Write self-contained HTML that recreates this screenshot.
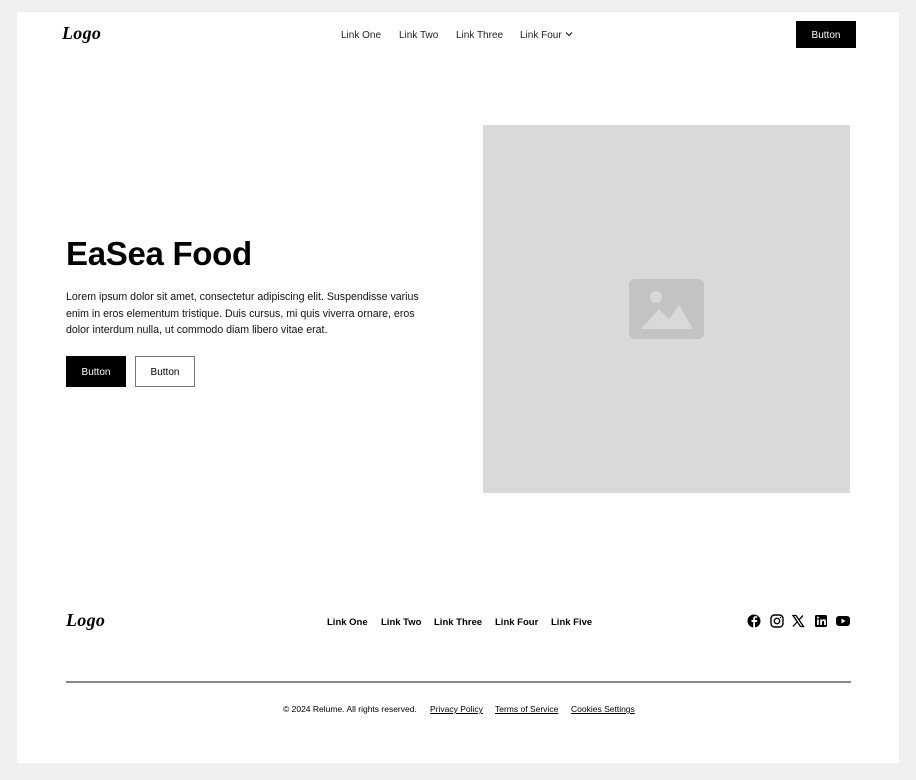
<!DOCTYPE html>
<html><head><style>
*{margin:0;padding:0;box-sizing:border-box}
body{width:916px;height:780px;background:#f0efed;font-family:"Liberation Sans",sans-serif;color:#000;position:relative;overflow:hidden}
.panel{position:absolute;left:17px;top:12px;width:882px;height:751px;background:#fff}
.a{position:absolute;white-space:nowrap}
.logo{font-family:"Liberation Serif",serif;font-style:italic;font-weight:bold;font-size:18px;letter-spacing:0.3px}
.nav{font-size:10px;color:#222}
.btn{position:absolute;font-size:10px;display:flex;align-items:center;justify-content:center;padding-top:2px}
.fl{font-size:9.5px;font-weight:bold}
.sm{font-size:8.5px}
u{text-decoration:underline}
</style></head><body>
<div class="panel"></div>
<div class="a logo" style="left:62px;top:23px">Logo</div>
<div class="a nav" style="left:341px;top:30px">Link One</div>
<div class="a nav" style="left:399px;top:30px">Link Two</div>
<div class="a nav" style="left:456px;top:30px">Link Three</div>
<div class="a nav" style="left:520px;top:30px">Link Four</div>
<svg class="a" style="left:565px;top:31px" width="8" height="6" viewBox="0 0 8 6"><path d="M1 1.5L4 4.5L7 1.5" stroke="#222" fill="none" stroke-width="1.2"/></svg>
<div class="btn" style="left:796px;top:21px;width:60px;height:27px;background:#000;color:#fff">Button</div>

<div class="a" style="left:66px;top:235px;font-size:33px;font-weight:bold;letter-spacing:-0.3px">EaSea Food</div>
<div class="a" style="left:66px;top:289px;width:375px;white-space:normal;font-size:10.6px;line-height:16.5px;color:#111">Lorem ipsum dolor sit amet, consectetur adipiscing elit. Suspendisse varius enim in eros elementum tristique. Duis cursus, mi quis viverra ornare, eros dolor interdum nulla, ut commodo diam libero vitae erat.</div>
<div class="btn" style="left:66px;top:356px;width:60px;height:31px;background:#000;color:#fff">Button</div>
<div class="btn" style="left:135px;top:356px;width:60px;height:31px;border:1px solid #777">Button</div>

<div class="a" style="left:483px;top:125px;width:367px;height:368px;background:#d9d9d9"></div>
<svg class="a" style="left:629px;top:279px" width="75" height="60" viewBox="0 0 75 60"><rect width="75" height="60" rx="6" fill="#c3c3c3"/><circle cx="27" cy="18" r="6" fill="#d9d9d9"/><path d="M12 50L30 30L40 40L50 26L64 50Z" fill="#d9d9d9"/></svg>

<div class="a logo" style="left:66px;top:610px">Logo</div>
<div class="a fl" style="left:327px;top:617px">Link One</div>
<div class="a fl" style="left:381px;top:617px">Link Two</div>
<div class="a fl" style="left:434px;top:617px">Link Three</div>
<div class="a fl" style="left:495px;top:617px">Link Four</div>
<div class="a fl" style="left:551px;top:617px">Link Five</div>
<svg class="a" style="left:747px;top:614px" width="104" height="14" viewBox="0 0 104 14">
<circle cx="7" cy="7" r="6.5" fill="#000"/><path d="M8 14V8h2l.3-2H8V4.8c0-.6.3-1 1-1h1.3V2.2H8.8C7 2.2 6.2 3.2 6.2 4.7V6H4.5v2h1.7v6z" fill="#fff"/>
<rect x="24" y="1" width="12" height="12" rx="3.5" fill="none" stroke="#000" stroke-width="1.4"/><circle cx="30" cy="7" r="2.7" fill="none" stroke="#000" stroke-width="1.4"/><circle cx="33.5" cy="3.5" r=".8"/>
<path d="M46 1.5h3l7.5 11h-3z M46 12.5l4.5-5 M56 1.5l-4.3 4.7" stroke="#000" stroke-width="1.3" fill="none"/>
<rect x="68" y="1" width="12" height="12" rx="1.5"/><rect x="70" y="5.5" width="1.8" height="5.5" fill="#fff"/><circle cx="70.9" cy="3.5" r="1" fill="#fff"/><path d="M73.2 11V5.5h1.7v.8c.5-.7 1.2-1 2-1 1.4 0 2 .9 2 2.4V11h-1.8V8c0-.8-.3-1.2-.9-1.2s-1.2.4-1.2 1.3V11z" fill="#fff"/>
<rect x="89" y="2" width="14" height="10" rx="3"/><path d="M94.5 4.5v5l4-2.5z" fill="#fff"/>
</svg>
<div class="a" style="left:66px;top:681px;width:785px;height:1.5px;background:#888"></div>
<div class="a sm" style="left:283px;top:704px">© 2024 Relume. All rights reserved.</div>
<div class="a sm" style="left:430px;top:704px"><u>Privacy Policy</u></div>
<div class="a sm" style="left:495px;top:704px"><u>Terms of Service</u></div>
<div class="a sm" style="left:571px;top:704px"><u>Cookies Settings</u></div>
</body></html>
